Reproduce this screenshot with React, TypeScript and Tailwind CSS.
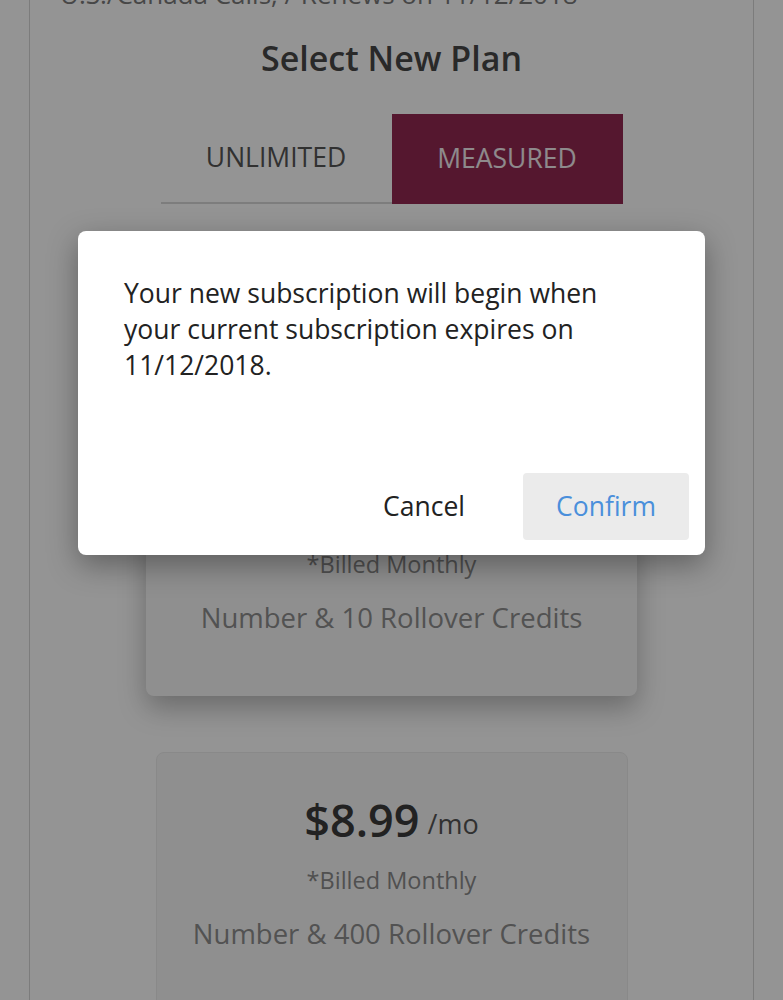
import React from 'react';

interface PlanCardProps {
  price: string;
  credits: string;
  selected?: boolean;
}

const PlanCard: React.FC<PlanCardProps> = ({ price, credits, selected }) => (
  <div
    className={
      selected
        ? 'w-[491px] rounded-lg bg-[#f7f7f7] pt-[211px] pb-[60px] shadow-[0_12px_28px_rgba(0,0,0,0.28)] flex flex-col items-center'
        : 'w-[472px] rounded-lg bg-[#f7f7f7] border border-[#ececec] pt-[36px] pb-[60px] flex flex-col items-center'
    }
  >
    <div className="flex h-[60px] items-center">
      <span className="text-[45px] font-semibold leading-none text-[#3c3c3c]">{price}</span>
      <span className="ml-2 mt-[8px] text-[27px] leading-none text-[#555]">/mo</span>
    </div>
    <p className="mt-[16px] text-[23.5px] leading-[30px] text-[#8a8a8a]">*Billed Monthly</p>
    <p className="mt-[21px] text-[27.5px] leading-[36px] text-[#8e8e8e]">{credits}</p>
  </div>
);

export default function App() {
  return (
    <div
      className="relative h-[1000px] w-[783px] overflow-hidden bg-white"
      style={{ fontFamily: '"Open Sans", "Noto Sans", sans-serif' }}
    >
      {/* page underneath */}
      <div className="mx-[29px] -mt-[24px] h-[1100px] border-x border-[#d6d6d6]">
        <p className="pl-[30px] text-[26px] leading-[36px] text-[#7a7a7a]">
          U.S./Canada Calls, / Renews on 11/12/2018
        </p>
        <h2 className="mt-[26px] text-center text-[34px] font-semibold leading-[40px] text-[#474747]">
          Select New Plan
        </h2>
        <div className="mt-[36px] flex justify-center">
          <button className="h-[90px] w-[231px] border-b-2 border-[#d8d8d8] text-[26.5px] text-[#555]">
            UNLIMITED
          </button>
          <button className="h-[90px] w-[231px] bg-[#932851] text-[26.5px] text-[#f4eef1]">
            MEASURED
          </button>
        </div>
        <div className="mt-[58px] flex flex-col items-center gap-[56px]">
          <PlanCard price="$4.99" credits="Number & 10 Rollover Credits" selected />
          <PlanCard price="$8.99" credits="Number & 400 Rollover Credits" />
        </div>
      </div>

      {/* dim overlay + dialog */}
      <div className="absolute inset-0 bg-black/[0.42] pt-[231px] pl-[78px]">
        <div className="flex h-[324px] w-[627px] flex-col rounded-lg bg-white shadow-[0_10px_30px_rgba(0,0,0,0.35)]">
          <p className="pl-[46px] pr-[81px] pt-[44px] text-[26.5px] leading-[36px] text-[#222]">
            Your new subscription will begin when your current subscription expires on 11/12/2018.
          </p>
          <div className="mt-auto flex justify-end gap-4 pr-4 pb-[15px]">
            <button className="h-[67px] w-[166px] rounded text-[26.5px] text-[#222]">Cancel</button>
            <button className="h-[67px] w-[166px] rounded bg-[#ebebeb] text-[26.5px] text-[#4a8fdb]">
              Confirm
            </button>
          </div>
        </div>
      </div>
    </div>
  );
}
